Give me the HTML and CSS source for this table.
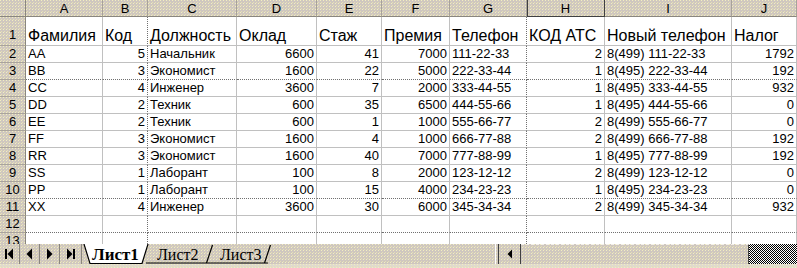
FILE: index.html
```html
<!DOCTYPE html>
<html lang="ru">
<head>
<meta charset="utf-8">
<title>Лист1</title>
<link rel="stylesheet" href="styles.css">
</head>
<body>
<div class="sheet">
  <div class="row hdr">
    <div class="c corner"></div>
    <div class="c">A</div><div class="c dv">B</div><div class="c">C</div><div class="c">D</div><div class="c">E</div><div class="c">F</div><div class="c">G</div><div class="c act">H</div><div class="c">I</div><div class="c">J</div>
  </div>
  <div class="row tall">
    <div class="c rh">1</div>
    <div class="c">Фамилия</div><div class="c dv">Код</div><div class="c">Должность</div><div class="c">Оклад</div><div class="c">Стаж</div><div class="c">Премия</div><div class="c dv">Телефон</div><div class="c">КОД АТС</div><div class="c">Новый телефон</div><div class="c">Налог</div>
  </div>
  <div class="row">
    <div class="c rh">2</div>
    <div class="c">AA</div><div class="c n dv">5</div><div class="c">Начальник</div><div class="c n">6600</div><div class="c n">41</div><div class="c n">7000</div><div class="c dv">111-22-33</div><div class="c n">2</div><div class="c">8(499) 111-22-33</div><div class="c n">1792</div>
  </div>
  <div class="row dh">
    <div class="c rh">3</div>
    <div class="c">BB</div><div class="c n dv">3</div><div class="c">Экономист</div><div class="c n">1600</div><div class="c n">22</div><div class="c n">5000</div><div class="c dv">222-33-44</div><div class="c n">1</div><div class="c">8(495) 222-33-44</div><div class="c n">192</div>
  </div>
  <div class="row">
    <div class="c rh">4</div>
    <div class="c">CC</div><div class="c n dv">4</div><div class="c">Инженер</div><div class="c n">3600</div><div class="c n">7</div><div class="c n">2000</div><div class="c dv">333-44-55</div><div class="c n">1</div><div class="c">8(495) 333-44-55</div><div class="c n">932</div>
  </div>
  <div class="row">
    <div class="c rh">5</div>
    <div class="c">DD</div><div class="c n dv">2</div><div class="c">Техник</div><div class="c n">600</div><div class="c n">35</div><div class="c n">6500</div><div class="c dv">444-55-66</div><div class="c n">1</div><div class="c">8(495) 444-55-66</div><div class="c n">0</div>
  </div>
  <div class="row">
    <div class="c rh">6</div>
    <div class="c">EE</div><div class="c n dv">2</div><div class="c">Техник</div><div class="c n">600</div><div class="c n">1</div><div class="c n">1000</div><div class="c dv">555-66-77</div><div class="c n">2</div><div class="c">8(499) 555-66-77</div><div class="c n">0</div>
  </div>
  <div class="row">
    <div class="c rh">7</div>
    <div class="c">FF</div><div class="c n dv">3</div><div class="c">Экономист</div><div class="c n">1600</div><div class="c n">4</div><div class="c n">1000</div><div class="c dv">666-77-88</div><div class="c n">2</div><div class="c">8(499) 666-77-88</div><div class="c n">192</div>
  </div>
  <div class="row">
    <div class="c rh">8</div>
    <div class="c">RR</div><div class="c n dv">3</div><div class="c">Экономист</div><div class="c n">1600</div><div class="c n">40</div><div class="c n">7000</div><div class="c dv">777-88-99</div><div class="c n">1</div><div class="c">8(495) 777-88-99</div><div class="c n">192</div>
  </div>
  <div class="row">
    <div class="c rh">9</div>
    <div class="c">SS</div><div class="c n dv">1</div><div class="c">Лаборант</div><div class="c n">100</div><div class="c n">8</div><div class="c n">2000</div><div class="c dv">123-12-12</div><div class="c n">2</div><div class="c">8(499) 123-12-12</div><div class="c n">0</div>
  </div>
  <div class="row dh">
    <div class="c rh">10</div>
    <div class="c">PP</div><div class="c n dv">1</div><div class="c">Лаборант</div><div class="c n">100</div><div class="c n">15</div><div class="c n">4000</div><div class="c dv">234-23-23</div><div class="c n">1</div><div class="c">8(495) 234-23-23</div><div class="c n">0</div>
  </div>
  <div class="row">
    <div class="c rh">11</div>
    <div class="c">XX</div><div class="c n dv">4</div><div class="c">Инженер</div><div class="c n">3600</div><div class="c n">30</div><div class="c n">6000</div><div class="c dv">345-34-34</div><div class="c n">2</div><div class="c">8(499) 345-34-34</div><div class="c n">932</div>
  </div>
  <div class="row dh">
    <div class="c rh">12</div>
    <div class="c"></div><div class="c dv"></div><div class="c"></div><div class="c"></div><div class="c"></div><div class="c"></div><div class="c dv"></div><div class="c"></div><div class="c"></div><div class="c"></div>
  </div>
  <div class="row">
    <div class="c rh">13</div>
    <div class="c"></div><div class="c dv"></div><div class="c"></div><div class="c"></div><div class="c"></div><div class="c"></div><div class="c dv"></div><div class="c"></div><div class="c"></div><div class="c"></div>
  </div>
</div>
<div class="bar">
  <div class="nav">
    <div class="btn"><svg width="19" height="20" viewBox="0 0 19 20"><rect x="5" y="5" width="2" height="10" fill="#000"/><polygon points="13,4.5 13,15.5 7.5,10" fill="#000"/></svg></div>
    <div class="btn"><svg width="19" height="20" viewBox="0 0 19 20"><polygon points="12,4.5 12,15.5 6.5,10" fill="#000"/></svg></div>
    <div class="btn"><svg width="19" height="20" viewBox="0 0 19 20"><polygon points="7,4.5 7,15.5 12.5,10" fill="#000"/></svg></div>
    <div class="btn"><svg width="19" height="20" viewBox="0 0 19 20"><polygon points="6,4.5 6,15.5 11.5,10" fill="#000"/><rect x="12" y="5" width="2" height="10" fill="#000"/></svg></div>
  </div>
  <svg class="tabs" width="413" height="20" viewBox="0 0 413 20">
    <polyline points="64,19 186,19" fill="none" stroke="#000" stroke-width="1"/>
    <line x1="124.5" y1="19" x2="130.5" y2="1" stroke="#000" stroke-width="1.2"/>
    <line x1="182.5" y1="19" x2="188.5" y2="1" stroke="#000" stroke-width="1.2"/>
    <polygon points="2,0 8,19.5 60,19.5 66,0" fill="#fff"/>
    <polyline points="2,0 8,19.5 60,19.5 66,0" fill="none" stroke="#000" stroke-width="1.2"/>
    <text x="10" y="16" class="t1">Лист1</text>
    <text x="75" y="16" class="t2">Лист2</text>
    <text x="138" y="16" class="t2">Лист3</text>
  </svg>
  <div class="split"></div>
  <div class="sbtn"><svg width="21" height="20" viewBox="0 0 21 20"><polygon points="13,5.5 13,14.5 8.5,10" fill="#000"/></svg></div>
  <div class="thumb"></div>
  <div class="track"></div>
</div>
<div class="status"></div>
</body>
</html>
```
FILE: styles.css
```css
:root {
  --face: #cfc7bf;
  --dot: #f2eec0;
  --dots: conic-gradient(at 1px 1px, transparent 75%, var(--dot) 0) 0 0 / 3px 3px,
          conic-gradient(at 1px 1px, transparent 75%, #e6dfb4 0) 1px 2px / 3px 3px;
}

html, body {
  margin: 0;
  padding: 0;
}

body {
  width: 797px;
  height: 268px;
  overflow: hidden;
  background: #fff;
  font-family: "Liberation Sans", Arial, sans-serif;
  color: #000;
}

.sheet {
  height: 244px;
  overflow: hidden;
}

.row {
  display: grid;
  grid-template-columns: 26px 77px 45px 89px 80px 65px 68px 77px 78px 127px 65px;
  height: 17px;
}

.row.tall {
  height: 29px;
}

.c {
  box-sizing: border-box;
  border-right: 1px solid #c0c0c0;
  border-bottom: 1px solid #c0c0c0;
  font-size: 13px;
  line-height: 15px;
  padding: 0 2px 1px 2px;
  white-space: nowrap;
  overflow: hidden;
  display: flex;
  align-items: flex-end;
}

.tall .c {
  font-size: 16px;
  line-height: 18px;
  padding-bottom: 0;
}

.n {
  justify-content: flex-end;
}

.dv {
  border-right: 1px dotted #707070;
}

.dh .c {
  border-bottom: 1px dotted #707070;
}

.hdr .c {
  background: var(--dots), var(--face);
  justify-content: center;
  align-items: center;
  padding: 0;
  border-right: 1px solid #a8a29a;
  border-bottom: 1px solid #8a867e;
}

.hdr .c.act {
  border-right: 1px solid #404040;
  border-bottom: 1px solid #404040;
  box-shadow: inset 1px 0 0 #404040;
}

.hdr .corner {
  border-right: 1px solid #8a867e;
}

.c.rh,
.tall .c.rh {
  background: var(--dots), var(--face);
  justify-content: center;
  border-right: 1px solid #8a867e;
  border-bottom: 1px solid #aaa49c;
  font-size: 13px;
  padding: 0 0 1px 0;
}

.bar {
  display: flex;
  height: 20px;
  background: var(--dots), var(--face);
}

.nav {
  display: flex;
  width: 82px;
  flex: none;
}

.btn {
  width: 20px;
  height: 20px;
  box-sizing: border-box;
  border-right: 1px solid #8a867e;
  display: flex;
  justify-content: center;
  align-items: center;
}

.btn:last-child {
  width: 22px;
}

.tabs {
  flex: none;
  display: block;
}

.tabs text {
  font-family: "Liberation Serif", "Times New Roman", serif;
  fill: #000;
}

.tabs .t1 {
  font-size: 17px;
  font-weight: bold;
}

.tabs .t2 {
  font-size: 16px;
}

.split {
  width: 2px;
  flex: none;
  border-left: 1px solid #fff;
  border-right: 1px solid #404040;
}

.sbtn {
  width: 22px;
  flex: none;
  box-sizing: border-box;
  border-right: 1px solid #404040;
  display: flex;
  align-items: center;
  justify-content: center;
}

.thumb {
  width: 228px;
  flex: none;
  box-sizing: border-box;
  border-right: 1px solid #404040;
  border-top: 1px dashed #f4f0e8;
}

.track {
  flex: 1;
  background: conic-gradient(#000 25%, #fff 0 50%, #000 0 75%, #fff 0) 0 0 / 2px 2px;
}

.status {
  height: 4px;
  background: var(--dots), #e0dace;
}
```
